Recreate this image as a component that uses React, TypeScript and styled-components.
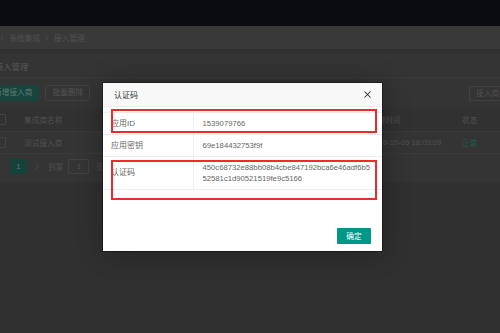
import * as React from 'react';
import styled, { createGlobalStyle } from 'styled-components';
import { ChevronLeft, ChevronRight, X } from 'lucide-react';

const GlobalStyle = createGlobalStyle`
  html, body {
    margin: 0;
    padding: 0;
    background: #303030;
  }
  body {
    font-family: "Liberation Sans", "Noto Sans CJK SC", sans-serif;
    font-size: 7.7px;
    color: #505050;
  }
`;

const Root = styled.div`
  position: relative;
  width: 500px;
  height: 333px;
  overflow: hidden;
  background: #303030;
`;

const TopBar = styled.header`
  height: 26px;
  background: #0b0c0f;
`;

const Main = styled.main`
  width: 530px;
  margin-left: -14px;
`;

const Breadcrumb = styled.nav`
  display: flex;
  align-items: center;
  gap: 6px;
  height: 23px;
  padding-left: 15px;
  background: #393939;
  color: #505050;
`;

const Card = styled.section`
  margin-top: 5px;
  background: #343434;
  padding-bottom: 8px;
`;

const CardHeader = styled.div`
  display: flex;
  align-items: center;
  height: 23px;
  padding-left: 9px;
  border-bottom: 1px solid #3a3a3a;
  font-size: 8.3px;
  color: #565656;
`;

const CardBody = styled.div`
  padding: 7px 1px 0 1px;
`;

const Toolbar = styled.div`
  display: flex;
  align-items: center;
  justify-content: space-between;
`;

const ButtonGroup = styled.div`
  display: flex;
  gap: 6px;
`;

const PageButton = styled.button<{ $primary?: boolean }>`
  height: 16px;
  padding: 0 6px;
  border: 1px solid ${(p) => (p.$primary ? '#17443c' : '#404040')};
  border-radius: 2px;
  background: ${(p) => (p.$primary ? '#17443c' : '#343434')};
  color: ${(p) => (p.$primary ? '#5d7a74' : '#555555')};
  font: inherit;
  line-height: 14px;
  box-sizing: border-box;
`;

const SearchBox = styled.div`
  width: 46px;
  height: 15px;
  box-sizing: border-box;
  padding-left: 6px;
  border: 1px solid #404040;
  white-space: nowrap;
  overflow: hidden;
  line-height: 13px;
  color: #505050;
`;

const ListTable = styled.table`
  width: 528px;
  margin-top: 8px;
  border-collapse: collapse;
  table-layout: fixed;
`;

const HeadRow = styled.tr`
  background: #313131;
`;

const Cell = styled.td<{ $width?: number; $ok?: boolean }>`
  width: ${(p) => (p.$width ? `${p.$width}px` : 'auto')};
  height: 22px;
  padding: 0 8px;
  box-sizing: border-box;
  border-bottom: 1px solid #393939;
  white-space: nowrap;
  overflow: hidden;
  text-align: left;
  font-weight: 400;
  color: ${(p) => (p.$ok ? '#1b5a4e' : '#505050')};
`;

const CheckBox = styled.span`
  display: block;
  width: 11px;
  height: 11px;
  box-sizing: border-box;
  border: 1px solid #434343;
  border-radius: 1px;
`;

const Pager = styled.div`
  display: flex;
  align-items: center;
  height: 15px;
  margin-top: 5px;
  color: #505050;
`;

const PagerArrow = styled.span<{ $width: number }>`
  display: flex;
  align-items: center;
  justify-content: center;
  width: ${(p) => p.$width}px;
  color: #474747;
`;

const PagerCurrent = styled.span`
  width: 17px;
  height: 15px;
  background: #15433b;
  color: #5b7a74;
  text-align: center;
  line-height: 15px;
`;

const PagerLabel = styled.span`
  margin-left: 1px;
`;

const PagerInput = styled.span`
  width: 21px;
  height: 15px;
  margin: 0 7px 0 5px;
  box-sizing: border-box;
  border: 1px solid #404040;
  text-align: center;
  line-height: 13px;
`;

const Shade = styled.div`
  position: absolute;
  inset: 0;
  display: flex;
  align-items: center;
  justify-content: center;
  padding-right: 15px;
`;

const Dialog = styled.div`
  position: relative;
  width: 279px;
  background: #ffffff;
  box-shadow: 0 0 0 1px rgba(0, 0, 0, 0.35), 1px 1px 25px rgba(0, 0, 0, 0.3);
`;

const DialogHeader = styled.div`
  display: flex;
  align-items: center;
  justify-content: space-between;
  height: 24px;
  box-sizing: border-box;
  padding: 0 9px 0 11px;
  background: #f8f8f8;
  border-bottom: 1px solid #eeeeee;
  font-size: 8px;
  color: #333333;
`;

const CloseButton = styled.span`
  display: flex;
  color: #2b2b2b;
`;

const DialogBody = styled.div`
  padding: 5px 0 38px;
`;

const InfoTable = styled.table`
  width: 100%;
  border-collapse: collapse;
  table-layout: fixed;
  border-top: 1px solid #eeeeee;
  color: #666666;
  line-height: 11px;
`;

const LabelCell = styled.td`
  width: 90px;
  padding: 5px 8px;
  box-sizing: border-box;
  border-bottom: 1px solid #eeeeee;
  border-right: 1px solid #eeeeee;
  font-size: 8px;
`;

const ValueCell = styled.td`
  padding: 5px 9px;
  border-bottom: 1px solid #eeeeee;
  word-break: break-all;
`;

const DialogFooter = styled.div`
  display: flex;
  justify-content: flex-end;
  padding: 0 11px 7px;
`;

const ConfirmButton = styled.button`
  width: 34px;
  height: 16px;
  padding: 0;
  border: none;
  border-radius: 1px;
  background: #009688;
  color: #ffffff;
  font: inherit;
`;

const Highlight = styled.div<{ $top: number; $height: number }>`
  position: absolute;
  left: 8px;
  top: ${(p) => p.$top}px;
  width: 266px;
  height: ${(p) => p.$height}px;
  box-sizing: border-box;
  border: 2px solid #ee2b2b;
  pointer-events: none;
`;

const credentials = [
  { label: '应用ID', value: '1539079766' },
  { label: '应用密钥', value: '69e184432753f9f' },
  { label: '认证码', value: '450c68732e88bb08b4cbe847192bca6e46adf6b552581c1d90521519fe9c5166' },
];

const App: React.FC = () => (
  <Root>
    <GlobalStyle />
    <TopBar />
    <Main>
      <Breadcrumb>
        <span>/</span>
        <span>系统集成</span>
        <span>/</span>
        <span>接入管理</span>
      </Breadcrumb>
      <Card>
        <CardHeader>接入管理</CardHeader>
        <CardBody>
          <Toolbar>
            <ButtonGroup>
              <PageButton $primary>新增接入商</PageButton>
              <PageButton>批量删除</PageButton>
            </ButtonGroup>
            <SearchBox>接入商名称</SearchBox>
          </Toolbar>
          <ListTable>
            <thead>
              <HeadRow>
                <Cell as="th" $width={29}><CheckBox /></Cell>
                <Cell as="th" $width={346}>集成商名称</Cell>
                <Cell as="th" $width={92}>创建时间</Cell>
                <Cell as="th" $width={61}>状态</Cell>
              </HeadRow>
            </thead>
            <tbody>
              <tr>
                <Cell><CheckBox /></Cell>
                <Cell>测试接入商</Cell>
                <Cell>2018-10-09 18:09:09</Cell>
                <Cell $ok>正常</Cell>
              </tr>
            </tbody>
          </ListTable>
          <Pager>
            <PagerArrow $width={23}><ChevronLeft size={14} strokeWidth={1.5} /></PagerArrow>
            <PagerCurrent>1</PagerCurrent>
            <PagerArrow $width={20}><ChevronRight size={14} strokeWidth={1.5} /></PagerArrow>
            <PagerLabel>到第</PagerLabel>
            <PagerInput>1</PagerInput>
            <span>页</span>
          </Pager>
        </CardBody>
      </Card>
    </Main>
    <Shade>
      <Dialog>
        <DialogHeader>
          <span>认证码</span>
          <CloseButton><X size={11} strokeWidth={2.2} /></CloseButton>
        </DialogHeader>
        <DialogBody>
          <InfoTable>
            <tbody>
              {credentials.map((c) => (
                <tr key={c.label}>
                  <LabelCell>{c.label}</LabelCell>
                  <ValueCell>{c.value}</ValueCell>
                </tr>
              ))}
            </tbody>
          </InfoTable>
        </DialogBody>
        <DialogFooter>
          <ConfirmButton>确定</ConfirmButton>
        </DialogFooter>
        <Highlight $top={26} $height={24} />
        <Highlight $top={77} $height={40} />
      </Dialog>
    </Shade>
  </Root>
);

export default App;
